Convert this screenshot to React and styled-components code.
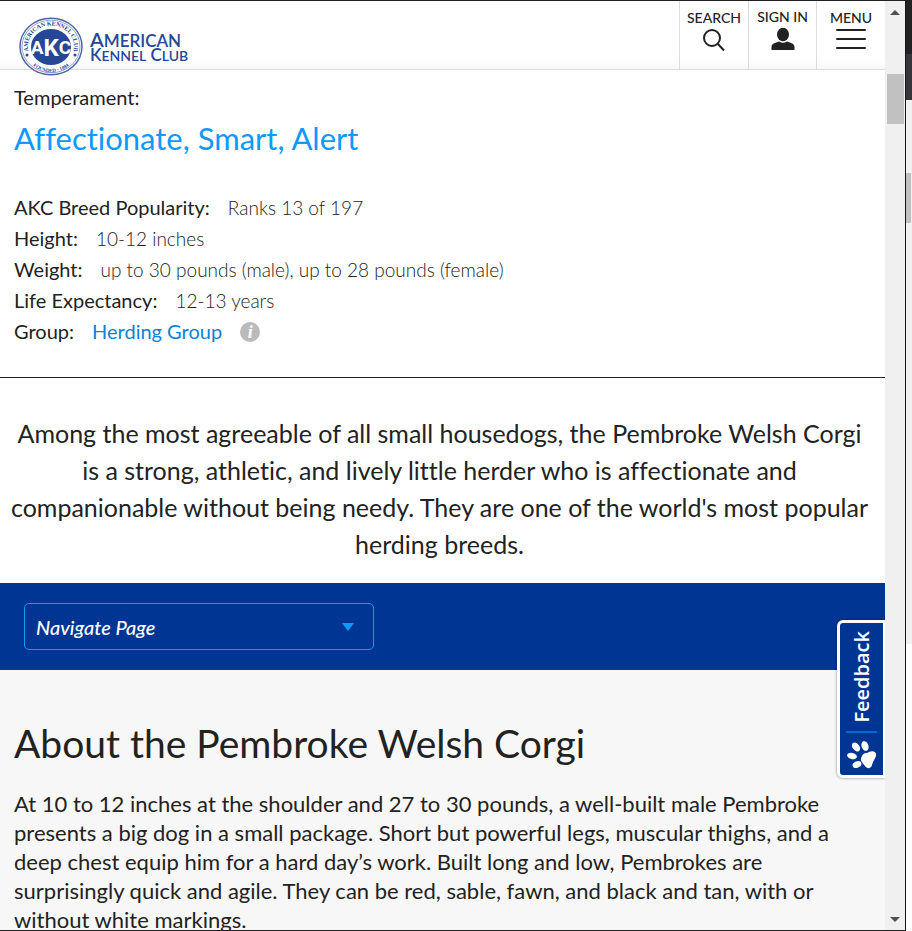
import React from "react";
import styled, { createGlobalStyle } from "styled-components";

const Global = createGlobalStyle`
  * { box-sizing: border-box; }
  body {
    margin: 0;
    background: #fff;
    color: #222;
    font-family: Lato, "Liberation Sans", sans-serif;
    font-variant-ligatures: none;
  }
`;

const Window = styled.div`
  display: grid;
  grid-template-columns: minmax(0, 1fr) 20px 7px;
  height: 100vh;
  overflow: hidden;
`;

const Viewport = styled.div`
  position: relative;
  display: flex;
  flex-direction: column;
  min-height: 0;
  overflow: hidden;
  border-top: 1px solid #222;
  border-bottom: 1px solid #222;
`;

const Header = styled.header`
  position: relative;
  z-index: 1;
  display: flex;
  justify-content: space-between;
  flex: none;
  height: 69px;
  background: linear-gradient(#fff 85%, #f8f8f8);
  border-bottom: 1px solid #dcdcdc;
`;

const LogoLink = styled.a`
  display: block;
  height: 80px;
  padding: 15px 0 0 18px;
`;

const Tools = styled.nav`
  display: flex;
`;

const Tool = styled.button`
  display: flex;
  flex-direction: column;
  align-items: center;
  width: ${(p) => p.$width}px;
  padding: ${(p) => p.$top}px 0 0;
  border: 0;
  border-left: 1px solid #dcdcdc;
  background: transparent;
  color: #222;
  font: 500 14px/16px Lato, sans-serif;
  white-space: nowrap;
  svg { display: block; margin-top: 2px; }
`;

const Main = styled.main`
  flex: none;
`;

const Summary = styled.section`
  padding: 15px 14px 30px;
  border-bottom: 1px solid #222;
`;

const Caption = styled.p`
  margin: 0;
  font-size: 20px;
  line-height: 24px;
`;

const Traits = styled.p`
  margin: 9px 0 34px;
  color: #0f99fa;
  font-size: 31px;
  line-height: 40px;
`;

const Facts = styled.dl`
  margin: 0;
  font-size: 20px;
  line-height: 31px;
`;

const Fact = styled.div`
  display: flex;
  align-items: center;
  gap: 18px;
`;

const Term = styled.dt``;

const Value = styled.dd`
  display: flex;
  align-items: center;
  gap: 18px;
  margin: 0;
  font-size: 19px;
  font-weight: 300;
`;

const GroupLink = styled.a`
  color: #0a82d6;
  font-size: 20px;
  font-weight: 400;
  text-decoration: none;
`;

const InfoButton = styled.button`
  display: block;
  width: 20px;
  height: 20px;
  padding: 0;
  border: 0;
  border-radius: 50%;
  background: #bbb;
  color: #fff;
  font: italic 700 18px/20px "Liberation Serif", serif;
`;

const Intro = styled.p`
  margin: 0;
  padding: 37px 14px 20px 8px;
  font-size: 25px;
  line-height: 37px;
  text-align: center;
`;

const NavigateBar = styled.div`
  padding: 20px 24px;
  background: #003594;
`;

const SelectBox = styled.div`
  display: grid;
  align-items: center;
  width: 350px;
  max-width: 100%;
  > * { grid-area: 1 / 1; }
  svg { justify-self: end; margin-right: 20px; pointer-events: none; }
`;

const Select = styled.select`
  width: 100%;
  height: 47px;
  padding: 0 40px 0 11px;
  appearance: none;
  border: 1px solid #0f99fa;
  border-radius: 5px;
  background: transparent;
  color: #fff;
  font: italic 500 20px/24px Lato, sans-serif;
`;

const About = styled.section`
  padding: 49px 14px 60px;
  background: #f7f7f7;
`;

const Title = styled.h2`
  margin: 0;
  font-size: 39px;
  font-weight: 400;
  line-height: 48px;
`;

const Body = styled.p`
  margin: 22px 0 0;
  font-size: 22px;
  line-height: 29px;
`;

const Feedback = styled.button`
  position: absolute;
  z-index: 2;
  right: 0;
  top: 619px;
  display: flex;
  flex-direction: column;
  align-items: center;
  justify-content: space-between;
  width: 48px;
  height: 158px;
  padding: 8px 0 6px;
  border: 3px solid #fff;
  border-right-width: 2px;
  border-radius: 6px 0 0 6px;
  background: #003594;
  box-shadow: 0 0 3px rgba(0, 0, 0, 0.45);
  color: #fff;
`;

const FeedbackLabel = styled.span`
  writing-mode: vertical-rl;
  transform: rotate(180deg);
  font: 600 20px/26px "Open Sans", sans-serif;
`;

const FeedbackRule = styled.span`
  width: 31px;
  height: 2px;
  background: #0768c9;
`;

const Scrollbar = styled.div`
  display: flex;
  flex-direction: column;
  align-items: center;
  justify-content: space-between;
  padding: 9px 0 8px;
  border-top: 1px solid #222;
  border-bottom: 1px solid #222;
  background: #f0f0f0;
  svg { display: block; }
`;

const Track = styled.div`
  flex: 1;
  width: 17px;
  padding-top: 59px;
`;

const Thumb = styled.div`
  height: 50px;
  background: #c1c1c1;
`;

const Behind = styled.div`
  display: flex;
  flex-direction: column;
  border-left: 1px solid #151515;
  background: #fff;
`;

const BehindPart = styled.div`
  flex: none;
  height: ${(p) => p.$height}px;
  margin-right: ${(p) => p.$inset || 0}px;
  background: ${(p) => p.$color};
`;

const BehindTrack = styled.div`
  height: 544px;
  padding-top: 73px;
  background: #f0f0f0;
`;

const Logo = () => (
  <svg width="174" height="62" viewBox="0 0 174 62" role="img" aria-label="American Kennel Club" fill="#254796">
    <defs>
      <path id="upperArc" d="M11.5 38 A23 21 0 1 1 54.5 38" />
      <path id="lowerArc" d="M7 38 A27 25 0 0 0 59 38" />
    </defs>
    <ellipse cx="33" cy="30.5" rx="31" ry="28.3" fill="#fff" stroke="#4a66a8" strokeWidth="1.5" />
    <ellipse cx="33" cy="30.5" rx="29" ry="26.3" fill="none" stroke="#8fa1cc" strokeWidth="1" />
    <ellipse cx="33" cy="31" rx="20" ry="18" />
    <text fontFamily="Liberation Serif" fontSize="6" fontWeight="700">
      <textPath href="#upperArc" startOffset="50%" textAnchor="middle">AMERICAN KENNEL CLUB</textPath>
    </text>
    <text fontFamily="Liberation Serif" fontSize="5" fontWeight="700">
      <textPath href="#lowerArc" startOffset="50%" textAnchor="middle">FOUNDED · 1884</textPath>
    </text>
    <circle cx="9" cy="39" r="1.5" />
    <circle cx="57" cy="39" r="1.5" />
    <text x="33" y="38" fill="#fff" textAnchor="middle" fontFamily="Roboto" fontWeight="700">
      <tspan fontSize="19">A</tspan><tspan fontSize="24" dy="2">K</tspan><tspan fontSize="19" dy="-2">C</tspan>
    </text>
    <g fontFamily="Lato" fontWeight="600">
      <text x="72" y="31" fontSize="20">A<tspan fontSize="17">MERICAN</tspan></text>
      <text x="72" y="45" fontSize="17">K<tspan fontSize="14">ENNEL</tspan> C<tspan fontSize="14">LUB</tspan></text>
    </g>
  </svg>
);

const SearchIcon = () => (
  <svg width="24" height="24" viewBox="0 0 24 24" fill="none" stroke="#222" strokeWidth="2">
    <circle cx="10" cy="10" r="8" />
    <path d="M15.5 15.5 22 22.5" />
  </svg>
);

const UserIcon = () => (
  <svg width="24" height="24" viewBox="0 0 24 24" fill="#222">
    <ellipse cx="12" cy="7.5" rx="6" ry="6.8" />
    <path d="M.5 23 V20 C.5 16.5 4 16 8 14.5 Q12 17 16 14.5 C20 16 23.5 16.5 23.5 20 V23 Z" />
  </svg>
);

const MenuIcon = () => (
  <svg width="32" height="24" viewBox="0 0 32 24" stroke="#222" strokeWidth="2" strokeLinecap="round">
    <path d="M2 2 H30 M2 11 H30 M2 20 H30" />
  </svg>
);

const PawIcon = () => (
  <svg width="30" height="28" viewBox="0 0 30 28" fill="#fff">
    <path d="M15 15 C17 11 19 13 22 11 C26 9 30 11 29 15 C28 18 26 20 25 24 C24 28 20 28 18 25 C16 22 12 20 15 15 Z" />
    <ellipse cx="18" cy="5" rx="3.4" ry="5" transform="rotate(-20 18 5)" />
    <ellipse cx="9" cy="6" rx="3.4" ry="5" transform="rotate(-38 9 6)" />
    <ellipse cx="5" cy="15" rx="3.2" ry="5" transform="rotate(-75 5 15)" />
    <ellipse cx="10" cy="23.5" rx="3.2" ry="4.6" transform="rotate(68 10 23.5)" />
  </svg>
);

const facts = [
  ["AKC Breed Popularity:", "Ranks 13 of 197"],
  ["Height:", "10-12 inches"],
  ["Weight:", "up to 30 pounds (male), up to 28 pounds (female)"],
  ["Life Expectancy:", "12-13 years"],
];

export default function App() {
  return (
    <>
      <Global />
      <Window>
        <Viewport>
          <Header>
            <LogoLink href="#home"><Logo /></LogoLink>
            <Tools aria-label="Site tools">
              <Tool $width={69} $top={9}>SEARCH<SearchIcon /></Tool>
              <Tool $width={68} $top={8}>SIGN IN<UserIcon /></Tool>
              <Tool $width={69} $top={9}>MENU<MenuIcon /></Tool>
            </Tools>
          </Header>
          <Main>
            <Summary>
              <Caption>Temperament:</Caption>
              <Traits>Affectionate, Smart, Alert</Traits>
              <Facts>
                {facts.map(([term, value]) => (
                  <Fact key={term}><Term>{term}</Term><Value>{value}</Value></Fact>
                ))}
                <Fact>
                  <Term>Group:</Term>
                  <Value>
                    <GroupLink href="#herding">Herding Group</GroupLink>
                    <InfoButton aria-label="About this group">i</InfoButton>
                  </Value>
                </Fact>
              </Facts>
            </Summary>
            <Intro>
              Among the most agreeable of all small housedogs, the Pembroke Welsh Corgi is a strong, athletic, and lively
              little herder who is affectionate and companionable without being needy. They are one of the world's most
              popular herding breeds.
            </Intro>
            <NavigateBar>
              <SelectBox>
                <Select aria-label="Navigate Page" defaultValue="nav">
                  <option value="nav">Navigate Page</option>
                </Select>
                <svg width="12" height="8" viewBox="0 0 12 8" fill="#0f99fa"><path d="M0 0 H12 L6 8 Z" /></svg>
              </SelectBox>
            </NavigateBar>
            <About>
              <Title>About the Pembroke Welsh Corgi</Title>
              <Body>
                At 10 to 12 inches at the shoulder and 27 to 30 pounds, a well-built male Pembroke presents a big dog in a
                small package. Short but powerful legs, muscular thighs, and a deep chest equip him for a hard day’s work.
                Built long and low, Pembrokes are surprisingly quick and agile. They can be red, sable, fawn, and black and
                tan, with or without white markings.
              </Body>
            </About>
          </Main>
          <Feedback>
            <FeedbackLabel>Feedback</FeedbackLabel>
            <FeedbackRule />
            <PawIcon />
          </Feedback>
        </Viewport>
        <Scrollbar aria-hidden="true">
          <svg width="10" height="5" viewBox="0 0 10 5" fill="#505050"><path d="M0 5 L5 0 L10 5 Z" /></svg>
          <Track><Thumb /></Track>
          <svg width="10" height="5" viewBox="0 0 10 5" fill="#505050"><path d="M0 0 H10 L5 5 Z" /></svg>
        </Scrollbar>
        <Behind aria-hidden="true">
          <BehindPart $height={54} $color="#222" />
          <BehindPart $height={46} $color="#35363a" />
          <BehindTrack><BehindPart $height={50} $inset={1} $color="#c1c1c1" /></BehindTrack>
        </Behind>
      </Window>
    </>
  );
}
